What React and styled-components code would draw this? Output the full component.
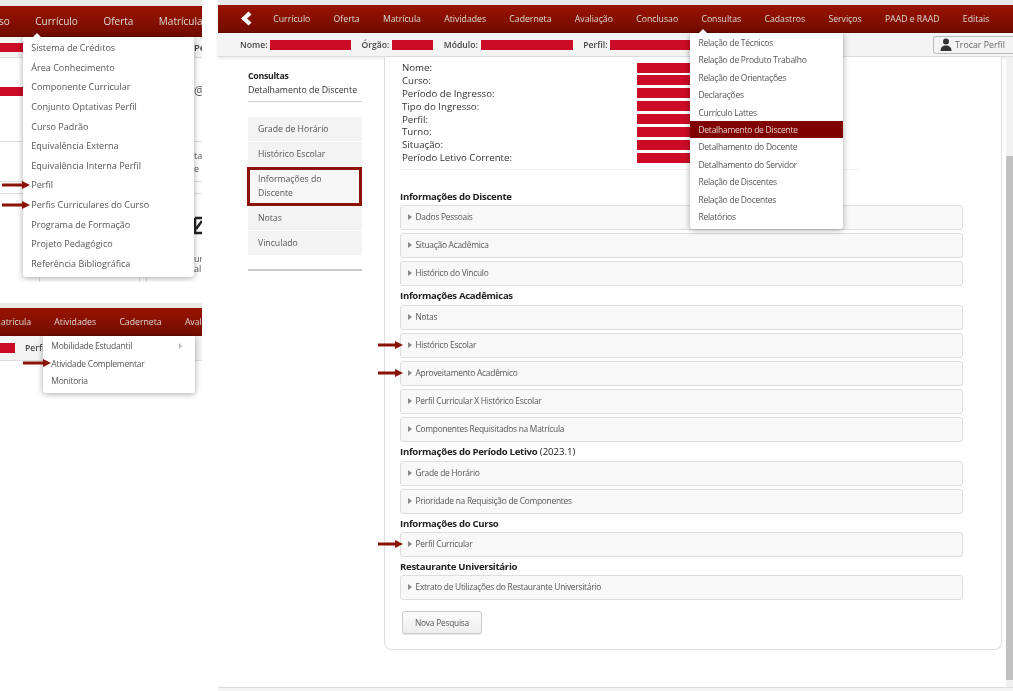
import styled, { createGlobalStyle } from "styled-components";

const GlobalStyle = createGlobalStyle`
  html, body {
    margin: 0;
    padding: 0;
    background: #fff;
    font-family: "Open Sans", "Noto Sans", sans-serif;
  }
  * { box-sizing: border-box; }
`;

/* the reference is a resized collage, so everything is a little soft */
const Page = styled.div`
  width: 1013px;
  height: 691px;
  display: flex;
  gap: 16px;
  overflow: hidden;
  background: #fff;
  filter: blur(0.3px);
`;

const LeftColumn = styled.div`
  width: 202px;
  flex: none;
  display: flex;
  flex-direction: column;
  gap: 21px;
`;

const Snippet = styled.section`
  position: relative;
  height: ${(p) => p.$height}px;
  overflow: hidden;
`;

const TopStrip = styled.div`
  height: ${(p) => p.$height}px;
  flex: none;
  background: #e9e9e9;
`;

const NavBar = styled.nav`
  height: ${(p) => p.$height}px;
  flex: none;
  display: flex;
  align-items: stretch;
  gap: ${(p) => p.$gap}px;
  margin-left: ${(p) => p.$offset || 0}px;
  background: linear-gradient(#9a1300, #720c00);
  border-bottom: 1px solid #6a0b00;
  color: #ddd;
  font-size: ${(p) => p.$size}px;
  white-space: nowrap;
`;

const NavItem = styled.div`
  position: relative;
  display: flex;
  align-items: center;
`;

const Back = styled.svg`
  flex: none;
  width: 12px;
  height: 15px;
  margin: 0 -2px 0 22px;
  align-self: center;
`;

const Menu = styled.ul`
  position: absolute;
  z-index: 5;
  top: ${(p) => p.$top}px;
  left: ${(p) => p.$left}px;
  width: ${(p) => p.$width}px;
  margin: 0;
  padding: ${(p) => p.$padTop}px 0 ${(p) => p.$padBottom}px;
  list-style: none;
  background: #fff;
  border-radius: 0 0 3px 3px;
  box-shadow: 0 1px 6px rgba(0, 0, 0, 0.35);
  color: #555;
  font-size: ${(p) => p.$size}px;
  letter-spacing: ${(p) => p.$tracking || 0}px;

  &::before {
    content: "";
    position: absolute;
    top: -4px;
    left: ${(p) => p.$caret}px;
    display: ${(p) => (p.$caret ? "block" : "none")};
    border-left: 4px solid transparent;
    border-right: 4px solid transparent;
    border-bottom: 4px solid #fff;
  }
`;

const MenuItem = styled.li`
  position: relative;
  height: ${(p) => p.$height}px;
  line-height: ${(p) => p.$height}px;
  padding-left: ${(p) => p.$indent}px;
  background: ${(p) => (p.$active ? "#800000" : "transparent")};
  color: ${(p) => (p.$active ? "#e4d0d0" : "inherit")};
`;

const SubMark = styled.span`
  position: absolute;
  right: 13px;
  top: 50%;
  margin-top: -3px;
  border-left: 3px solid #bbb;
  border-top: 3px solid transparent;
  border-bottom: 3px solid transparent;
`;

const ArrowMark = styled.svg`
  position: absolute;
  z-index: 6;
  top: 50%;
  left: ${(p) => p.$left}px;
  width: ${(p) => p.$width}px;
  height: 8px;
  margin-top: -4px;
`;

const Arrow = ({ left, width }) => (
  <ArrowMark $left={left} $width={width} viewBox={`0 0 ${width} 8`}>
    <path d={`M0 2.5H${width - 8}V0L${width} 4L${width - 8} 8V5.5H0Z`} fill="#8a1207" />
  </ArrowMark>
);

const Redacted = styled.span`
  display: block;
  flex: none;
  width: ${(p) => p.$width}px;
  height: ${(p) => p.$height || 10}px;
  background: #cc0b27;
`;

/* cropped bits of page that peek out around the menus */
const SnippetBar = styled.div`
  height: ${(p) => p.$height}px;
  display: flex;
  align-items: center;
  justify-content: space-between;
  background: #f4f4f4;
  border-bottom: 1px solid #ddd;
  color: #444;
  font-size: 9.4px;
  font-weight: 600;
  white-space: nowrap;
`;

const SnippetLabel = styled.span`
  margin: 0 auto 0 10px;
  font-size: 8.6px;
`;

const Peek = styled.div`
  height: ${(p) => p.$height}px;
  margin-top: ${(p) => p.$top || 0}px;
  display: flex;
  align-items: ${(p) => (p.$ruled ? "flex-end" : "center")};
  justify-content: space-between;
  border-top: ${(p) => (p.$lined || p.$ruled ? "1px solid #ddd" : "none")};
  border-bottom: ${(p) => (p.$lined ? "1px solid #ddd" : "none")};
  color: #555;
  font-size: ${(p) => p.$size || 9}px;
  line-height: ${(p) => p.$leading || 10}px;
  white-space: nowrap;
  overflow: hidden;
`;

const PeekText = styled.span`
  margin-left: auto;
  width: 8px;
  overflow: hidden;
  font-weight: ${(p) => p.$weight || 400};
`;

const Stubs = styled.div`
  position: absolute;
  left: 0;
  right: 0;
  bottom: 0;
  height: 5px;
  background-image: linear-gradient(#ddd, #ddd), linear-gradient(#ddd, #ddd), linear-gradient(#ddd, #ddd);
  background-size: 1px 100%;
  background-position: 39px 0, 139px 0, 146px 0;
  background-repeat: no-repeat;
`;

const Main = styled.main`
  flex: 1;
  min-width: 0;
  height: 691px;
  display: flex;
  flex-direction: column;
`;

const InfoBar = styled.div`
  height: 24px;
  flex: none;
  display: flex;
  align-items: center;
  padding-left: 22px;
  background: #f4f4f4;
  border-bottom: 1px solid #ddd;
  box-shadow: 0 1px 3px rgba(0, 0, 0, 0.12);
  color: #444;
  font-size: 8.6px;
  font-weight: 600;
  white-space: nowrap;
`;

const InfoLabel = styled.span`
  margin-right: 3px;
  margin-left: ${(p) => p.$gap || 0}px;
`;

const SwapButton = styled.button`
  margin-left: auto;
  width: 80px;
  height: 18px;
  display: flex;
  align-items: center;
  gap: 3px;
  padding: 0 0 0 6px;
  background: #f4f4f4;
  border: 1px solid #bbb;
  border-right: none;
  border-radius: 3px 0 0 3px;
  color: #666;
  font-family: inherit;
  font-size: 8.8px;
`;

const Body = styled.div`
  flex: 1;
  min-height: 0;
  display: flex;
`;

const Sidebar = styled.aside`
  width: 166px;
  flex: none;
  padding: 12px 22px 0 30px;
  color: #333;
  font-size: 8.8px;
`;

const Crumb = styled.div`
  height: 14px;
  line-height: 14px;
  font-weight: ${(p) => (p.$bold ? 700 : 400)};
  letter-spacing: ${(p) => (p.$bold ? -0.3 : 0)}px;
  color: ${(p) => (p.$bold ? "#222" : "inherit")};
  white-space: nowrap;
`;

const SideRule = styled.hr`
  height: ${(p) => p.$height}px;
  margin: ${(p) => p.$top}px 0 0;
  border: none;
  background: #ccc;
`;

const SideList = styled.div`
  margin-top: 15px;
  display: flex;
  flex-direction: column;
`;

const SideItem = styled.div`
  height: ${(p) => (p.$flagged ? 39 : 24)}px;
  padding: 5px 10px;
  margin-bottom: ${(p) => (p.$flagged ? 0 : 1)}px;
  background: #f3f3f3;
  color: #555;
  line-height: 14px;
  font-size: 8.7px;
  ${(p) =>
    p.$flagged &&
    `
    padding: 3px 7px 0 8px;
    margin-left: -1px;
    border: 3px solid #8a1207;
    line-height: 13.5px;
    background: #f7f7f7;
  `}
`;

const Panel = styled.div`
  width: 618px;
  flex: none;
  height: 593px;
  padding: 4px 0 0 15px;
  border: 1px solid #ddd;
  border-top: none;
  border-radius: 0 0 8px 8px;
  background: #fff;
`;

const Facts = styled.div`
  padding-left: 2px;
  padding-bottom: 5px;
  width: 458px;
  border-bottom: 1px solid #fdeef0;
`;

const Fact = styled.div`
  height: 12.9px;
  display: grid;
  grid-template-columns: 235px 70px;
  align-items: center;
  color: #333;
  font-size: 9.7px;
`;

const GroupTitle = styled.h3`
  margin: ${(p) => p.$top}px 0 0;
  height: 13px;
  line-height: 13px;
  color: #222;
  font-size: 9.6px;
  font-weight: 700;
  letter-spacing: -0.3px;

  span {
    font-weight: 400;
    letter-spacing: 0;
  }
`;

const Accordion = styled.div`
  position: relative;
  width: 563px;
  height: 25px;
  margin-top: ${(p) => p.$top}px;
  display: flex;
  align-items: center;
  gap: 3.5px;
  padding: 0 0 1px 7px;
  background: #f8f8f8;
  border: 1px solid #ddd;
  border-radius: 3px;
  color: #555;
  font-size: 8.4px;
  letter-spacing: -0.25px;
`;

const Triangle = styled.i`
  border-left: 4px solid #888;
  border-top: 3px solid transparent;
  border-bottom: 3px solid transparent;
`;

const NewSearch = styled.button`
  display: block;
  width: 80px;
  height: 23px;
  margin: 11px 0 0 2px;
  padding: 0;
  background: linear-gradient(#fbfbfb, #eeeeee);
  border: 1px solid #ccc;
  border-radius: 3px;
  box-shadow: 0 1px 1px rgba(0, 0, 0, 0.12);
  color: #555;
  font-family: inherit;
  font-size: 8.3px;
  letter-spacing: -0.2px;
`;

const ScrollTrack = styled.div`
  width: 7px;
  flex: none;
  margin-left: 4px;
  padding-top: 99px;
  padding-bottom: 7px;
  background: #f1f1f1;
`;

const ScrollThumb = styled.div`
  height: 100%;
  background: #c1c1c1;
`;

const Footer = styled.div`
  height: 4px;
  flex: none;
  background: #f4f4f4;
  border-top: 1px solid #ddd;
`;

const mainNav = ["Currículo", "Oferta", "Matrícula", "Atividades", "Caderneta", "Avaliação", "Conclusao"];
const mainNavEnd = ["Cadastros", "Serviços", "PAAD e RAAD", "Editais"];
const curriculoMenu = [
  "Sistema de Créditos",
  "Área Conhecimento",
  "Componente Curricular",
  "Conjunto Optativas Perfil",
  "Curso Padrão",
  "Equivalência Externa",
  "Equivalência Interna Perfil",
  "Perfil",
  "Perfis Curriculares do Curso",
  "Programa de Formação",
  "Projeto Pedagógico",
  "Referência Bibliográfica",
];
const consultasMenu = [
  "Relação de Técnicos",
  "Relação de Produto Trabalho",
  "Relação de Orientações",
  "Declarações",
  "Currículo Lattes",
  "Detalhamento de Discente",
  "Detalhamento do Docente",
  "Detalhamento do Servidor",
  "Relação de Discentes",
  "Relação de Docentes",
  "Relatórios",
];
const facts = [
  "Nome:",
  "Curso:",
  "Período de Ingresso:",
  "Tipo do Ingresso:",
  "Perfil:",
  "Turno:",
  "Situação:",
  "Período Letivo Corrente:",
];
const groups = [
  { title: "Informações do Discente", top: 20, first: 1.5, items: ["Dados Pessoais", "Situação Acadêmica", "Histórico do Vinculo"] },
  {
    title: "Informações Acadêmicas",
    top: 3.5,
    first: 2.5,
    items: ["Notas", "Histórico Escolar", "Aproveitamento Acadêmico", "Perfil Curricular X Histórico Escolar", "Componentes Requisitados na Matrícula"],
    marked: ["Histórico Escolar", "Aproveitamento Acadêmico"],
  },
  { title: "Informações do Período Letivo", note: " (2023.1)", top: 3.5, first: 2.5, items: ["Grade de Horário", "Prioridade na Requisição de Componentes"] },
  { title: "Informações do Curso", top: 3.5, first: 1.5, items: ["Perfil Curricular"], marked: ["Perfil Curricular"] },
  { title: "Restaurante Universitário", top: 3.5, first: 1.5, items: ["Extrato de Utilizações do Restaurante Universitário"] },
];

function App() {
  return (
    <Page>
      <GlobalStyle />
      <LeftColumn>
        <Snippet $height={282}>
          <TopStrip $height={6} />
          <NavBar $height={31} $gap={25.5} $size={10} $offset={-22.5}>
            <NavItem>Acesso</NavItem>
            <NavItem>
              Currículo
              <Menu $top={31} $left={-12} $width={171} $padTop={1} $padBottom={3} $size={9.05} $caret={10}>
                {curriculoMenu.map((label) => (
                  <MenuItem key={label} $height={19.65} $indent={8}>
                    {label}
                    {(label === "Perfil" || label === "Perfis Curriculares do Curso") && <Arrow left={-21} width={28} />}
                  </MenuItem>
                ))}
              </Menu>
            </NavItem>
            <NavItem>Oferta</NavItem>
            <NavItem>Matrícula</NavItem>
          </NavBar>
          <SnippetBar $height={21}>
            <Redacted $width={23} $height={9} />
            <PeekText $weight={600}>Perfil</PeekText>
          </SnippetBar>
          <Peek $height={12} $top={27} $size={12}>
            <Redacted $width={23} $height={9} />
            <PeekText>@</PeekText>
          </Peek>
          <Peek $height={41} $top={44} $lined $leading={13}>
            <PeekText>
              ta
              <br />e |
            </PeekText>
          </Peek>
          <Peek $height={42} $top={11} $ruled>
            <svg width="202" height="20" viewBox="0 0 202 20">
              <path d="M195 3H202M195 3V18H202M196 14L202 6" fill="none" stroke="#222" strokeWidth="2.5" />
            </svg>
          </Peek>
          <Peek $height={24} $top={17}>
            <PeekText>
              ur
              <br />
              ali
            </PeekText>
          </Peek>
          <Stubs />
        </Snippet>
        <Snippet $height={100}>
          <TopStrip $height={5} />
          <NavBar $height={28} $gap={23.3} $size={8.7} $offset={-7}>
            <NavItem>Matrícula</NavItem>
            <NavItem>
              Atividades
              <Menu $top={28} $left={-11} $width={152} $padTop={1} $padBottom={3.5} $size={8.5} $tracking={-0.25} $caret={0}>
                <MenuItem $height={17.5} $indent={8}>
                  Mobilidade Estudantil
                  <SubMark />
                </MenuItem>
                <MenuItem $height={17.5} $indent={8}>
                  Atividade Complementar
                  <Arrow left={-20} width={28} />
                </MenuItem>
                <MenuItem $height={17.5} $indent={8}>
                  Monitoria
                </MenuItem>
              </Menu>
            </NavItem>
            <NavItem>Caderneta</NavItem>
            <NavItem>Avaliação</NavItem>
          </NavBar>
          <SnippetBar $height={25}>
            <Redacted $width={15} $height={10} />
            <SnippetLabel>Perfil</SnippetLabel>
          </SnippetBar>
        </Snippet>
      </LeftColumn>

      <Main>
        <TopStrip $height={5} />
        <NavBar $height={28} $gap={23.3} $size={8.7}>
          <Back viewBox="0 0 12 15">
            <path d="M8.5 0.5 L1 7.5 L8.5 14.5 L11.5 11.5 L7 7.5 L11.5 3.5 Z" fill="#fff" />
          </Back>
          {mainNav.map((label) => (
            <NavItem key={label}>{label}</NavItem>
          ))}
          <NavItem>
            Consultas
            <Menu $top={28} $left={-11} $width={153} $padTop={1} $padBottom={3.6} $size={8.5} $tracking={-0.25} $caret={9}>
              {consultasMenu.map((label) => (
                <MenuItem key={label} $height={17.4} $indent={8} $active={label === "Detalhamento de Discente"}>
                  {label}
                </MenuItem>
              ))}
            </Menu>
          </NavItem>
          {mainNavEnd.map((label) => (
            <NavItem key={label}>{label}</NavItem>
          ))}
        </NavBar>
        <InfoBar>
          <InfoLabel>Nome:</InfoLabel>
          <Redacted $width={81} />
          <InfoLabel $gap={10}>Órgão:</InfoLabel>
          <Redacted $width={41} />
          <InfoLabel $gap={10.5}>Módulo:</InfoLabel>
          <Redacted $width={92} />
          <InfoLabel $gap={10.5}>Perfil:</InfoLabel>
          <Redacted $width={90} />
          <SwapButton>
            <svg width="12" height="13" viewBox="0 0 12 13">
              <circle cx="6" cy="3.5" r="3" fill="#333" />
              <path d="M0.5 13 C0.5 9 3 7.5 6 7.5 C9 7.5 11.5 9 11.5 13 Z" fill="#333" />
            </svg>
            Trocar Perfil
          </SwapButton>
        </InfoBar>
        <Body>
          <Sidebar>
            <Crumb $bold>Consultas</Crumb>
            <Crumb>Detalhamento de Discente</Crumb>
            <SideRule $height={1} $top={4} />
            <SideList>
              <SideItem>Grade de Horário</SideItem>
              <SideItem>Histórico Escolar</SideItem>
              <SideItem $flagged>
                Informações do
                <br />
                Discente
              </SideItem>
              <SideItem>Notas</SideItem>
              <SideItem>Vinculado</SideItem>
            </SideList>
            <SideRule $height={2} $top={13} />
          </Sidebar>
          <Panel>
            <Facts>
              {facts.map((label) => (
                <Fact key={label}>
                  {label}
                  <Redacted $width={70} />
                </Fact>
              ))}
            </Facts>
            {groups.map((group) => (
              <div key={group.title}>
                <GroupTitle $top={group.top}>
                  {group.title}
                  {group.note && <span>{group.note}</span>}
                </GroupTitle>
                {group.items.map((label, i) => (
                  <Accordion key={label} $top={i === 0 ? group.first : 3}>
                    <Triangle />
                    {label}
                    {group.marked?.includes(label) && <Arrow left={-23} width={25} />}
                  </Accordion>
                ))}
              </div>
            ))}
            <NewSearch>Nova Pesquisa</NewSearch>
          </Panel>
          <ScrollTrack>
            <ScrollThumb />
          </ScrollTrack>
        </Body>
        <Footer />
      </Main>
    </Page>
  );
}

export default App;
